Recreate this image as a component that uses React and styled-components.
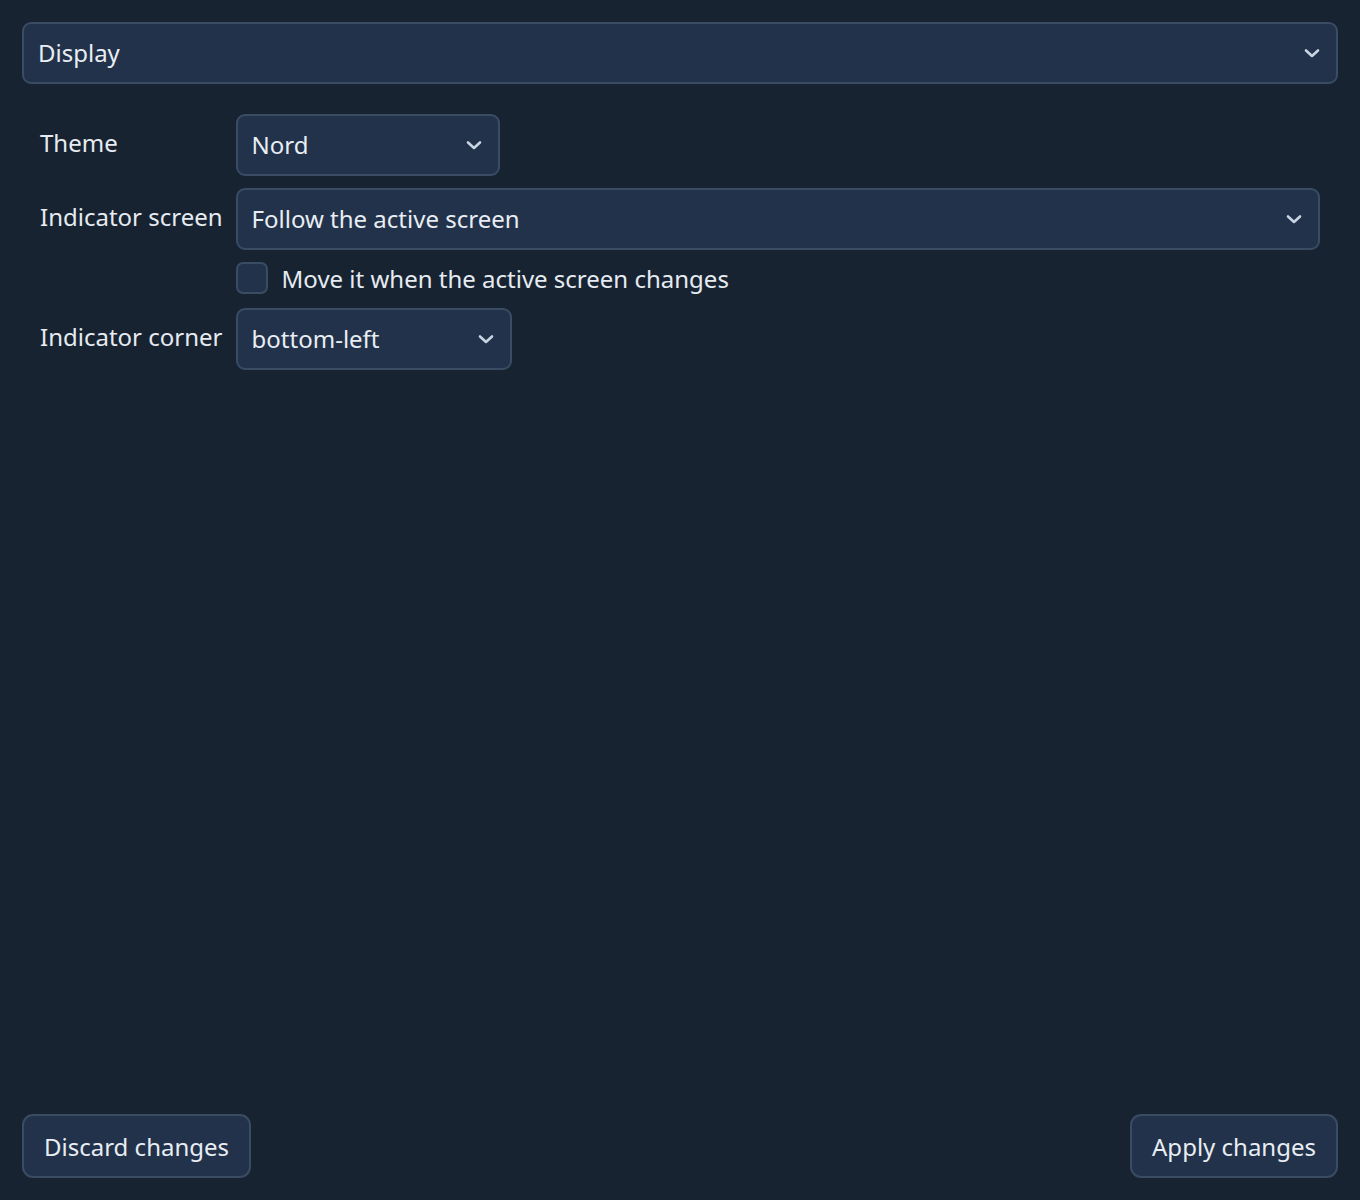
import React from "react";
import styled, { createGlobalStyle } from "styled-components";

const Global = createGlobalStyle`
  html, body {
    margin: 0;
    padding: 0;
    background: #182331;
  }
  body {
    font-family: "Noto Sans", "Open Sans", sans-serif;
    color: #e6ebf1;
  }
`;

const Page = styled.div`
  box-sizing: border-box;
  width: 1360px;
  height: 1200px;
  padding: 22px;
  display: flex;
  flex-direction: column;
`;

const Combo = styled.div`
  box-sizing: border-box;
  height: 62px;
  width: ${(p) => (p.$width ? `${p.$width}px` : "auto")};
  display: flex;
  align-items: center;
  justify-content: space-between;
  padding: 0 16px 0 14px;
  background: #22324a;
  border: 2px solid #3a4c63;
  border-radius: 9px;
  font-size: 24px;
  color: #e8edf3;
  cursor: pointer;
`;

const ComboText = styled.span`
  line-height: 1;
`;

const Chevron = () => (
  <svg width="16" height="12" viewBox="0 0 16 12">
    <path
      d="M2 3.5 L8 9 L14 3.5"
      fill="none"
      stroke="#c9d4e2"
      strokeWidth="2.6"
      strokeLinecap="round"
      strokeLinejoin="round"
    />
  </svg>
);

const Form = styled.div`
  display: grid;
  grid-template-columns: auto 1fr;
  column-gap: 13px;
  row-gap: 12px;
  padding: 30px 18px 0 18px;
  align-items: center;
`;

const Label = styled.div`
  font-size: 24px;
  padding-bottom: 6px;
  color: #e6ebf1;
`;

const Field = styled.div`
  grid-column: 2;
  display: ${(p) => (p.$stretch ? "block" : "flex")};
`;

const CheckRow = styled.label`
  grid-column: 2;
  display: flex;
  align-items: center;
  gap: 14px;
  font-size: 24px;
  height: 32px;
  margin-bottom: 2px;
`;

const Box = styled.span`
  box-sizing: border-box;
  width: 32px;
  height: 32px;
  background: #22324a;
  border: 2px solid #3a4c63;
  border-radius: 7px;
`;

const Spacer = styled.div`
  flex: 1;
`;

const Footer = styled.div`
  display: flex;
  justify-content: space-between;
  align-items: center;
`;

const Button = styled.button`
  box-sizing: border-box;
  height: 64px;
  padding: 0 20px;
  background: #22324a;
  border: 2px solid #3a4c63;
  border-radius: 11px;
  font-family: "Noto Sans", "Open Sans", sans-serif;
  font-size: 24px;
  color: #e8edf3;
  cursor: pointer;
`;

const Select = ({ value, width }) => (
  <Combo $width={width}>
    <ComboText>{value}</ComboText>
    <Chevron />
  </Combo>
);

export default function App() {
  return (
    <>
      <Global />
      <Page>
        <Select value="Display" />
        <Form>
          <Label>Theme</Label>
          <Field>
            <Select value="Nord" width={264} />
          </Field>
          <Label>Indicator screen</Label>
          <Field $stretch>
            <Select value="Follow the active screen" />
          </Field>
          <CheckRow>
            <Box />
            Move it when the active screen changes
          </CheckRow>
          <Label>Indicator corner</Label>
          <Field>
            <Select value="bottom-left" width={276} />
          </Field>
        </Form>
        <Spacer />
        <Footer>
          <Button>Discard changes</Button>
          <Button>Apply changes</Button>
        </Footer>
      </Page>
    </>
  );
}
